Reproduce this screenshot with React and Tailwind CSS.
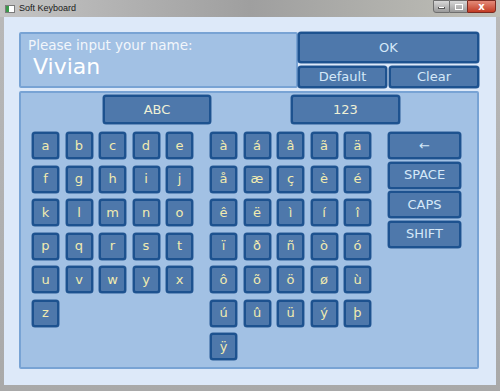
import React from 'react';

const letters = ['a', 'b', 'c', 'd', 'e', 'f', 'g', 'h', 'i', 'j', 'k', 'l', 'm', 'n', 'o', 'p', 'q', 'r', 's', 't', 'u', 'v', 'w', 'y', 'x', 'z'];
const accents = ['à', 'á', 'â', 'ã', 'ä', 'å', 'æ', 'ç', 'è', 'é', 'ê', 'ë', 'ì', 'í', 'î', 'ï', 'ð', 'ñ', 'ò', 'ó', 'ô', 'õ', 'ö', 'ø', 'ù', 'ú', 'û', 'ü', 'ý', 'þ', 'ÿ'];

const keyBase = 'flex items-center justify-center border-2 border-[#1d528f] bg-[#4e78ab] rounded-[3px] shadow-[0_0_0_0.5px_#2a5c96]';

const Key = ({ label }) => (
    <div className={`${keyBase} w-[27px] h-[27px] text-[13px] text-[#f1ebb0]`}>{label}</div>
);

const WideKey = ({ label, className = '' }) => (
    <div className={`${keyBase} text-[13px] text-[#d5e8f8] ${className}`}>{label}</div>
);

const App = () => {
    return (
        <div className="w-[500px] h-[391px] flex flex-col bg-gradient-to-b from-[#b9b9b9] to-[#a9a9a9] overflow-hidden" style={{ fontFamily: '"DejaVu Sans", sans-serif' }}>
            {/* title bar */}
            <div className="h-[17px] flex items-start relative bg-gradient-to-r from-[#c4c4c4] via-[#9f9f9f] to-[#c0c0b8]">
                <div className="mt-[5px] ml-[5px] w-[10px] h-[8px] bg-white border border-[#7a7a7a] flex">
                    <div className="w-[3px] bg-[#3a9a4a]" />
                </div>
                <span className="ml-[4px] mt-[3px] text-[9px] leading-[11px] text-[#1a1a1a]" style={{ fontFamily: '"Liberation Sans", sans-serif' }}>Soft Keyboard</span>
                <div className="absolute top-0 right-[4px] flex h-[13px]">
                    <div className="w-[17px] h-full bg-gradient-to-b from-[#d8d8d8] to-[#9a9a9a] border border-[#6f6f6f] rounded-bl-[3px] flex items-end justify-center pb-[3px]">
                        <div className="w-[7px] h-[2px] bg-white border border-[#555] border-t-0" />
                    </div>
                    <div className="w-[17px] h-full bg-gradient-to-b from-[#d8d8d8] to-[#9a9a9a] border-y border-[#6f6f6f] flex items-center justify-center">
                        <div className="w-[8px] h-[6px] border border-white" />
                    </div>
                    <div className="w-[29px] h-full bg-gradient-to-b from-[#e48a78] to-[#c23a22] border border-[#7a2a20] rounded-br-[3px] flex items-center justify-center text-white text-[10px] font-bold leading-none">x</div>
                </div>
            </div>

            {/* client area */}
            <div className="mx-[4px] mb-[6px] flex-1 bg-[#dde9f9] pt-[15px] pl-[15px]">
                {/* top panel */}
                <div className="flex w-[460px] h-[56px]">
                    <div className="flex-1 border-2 border-[#78a3d4] bg-[#a2c1e4] rounded-[2px] pl-[7px] pt-[3px]">
                        <div className="text-[13.5px] leading-[16px] text-[#f2f6fb]">Please input your name:</div>
                        <div className="text-[22px] leading-[26px] text-white ml-[5px] mt-[1px]">Vivian</div>
                    </div>
                    <div className="w-[181px] flex flex-col gap-[3px]">
                        <WideKey label="OK" className="h-[31px]" />
                        <div className="flex gap-[2px] h-[22px]">
                            <WideKey label="Default" className="w-[89px]" />
                            <WideKey label="Clear" className="flex-1" />
                        </div>
                    </div>
                </div>

                {/* keyboard panel */}
                <div className="mt-[3px] w-[460px] h-[278px] border-2 border-[#78a3d4] bg-[#a2c1e4] rounded-[2px]">
                    <div className="flex mt-[2px] ml-[82px] gap-[80px]">
                        <WideKey label="ABC" className="w-[108px] h-[29px] text-[#eef0d6]" />
                        <WideKey label="123" className="w-[109px] h-[29px] text-[#eef0d6]" />
                    </div>
                    <div className="flex mt-[8px] ml-[11px] gap-[17px] items-start">
                        <div className="grid grid-cols-5 gap-[6.5px] w-[161px]">
                            {letters.map(k => <Key key={k} label={k} />)}
                        </div>
                        <div className="grid grid-cols-5 gap-[6.5px] w-[161px]">
                            {accents.map(k => <Key key={k} label={k} />)}
                        </div>
                        <div className="flex flex-col gap-[2.5px] w-[73px]">
                            <WideKey label="←" className="h-[27px]" />
                            <WideKey label="SPACE" className="h-[27px]" />
                            <WideKey label="CAPS" className="h-[27px]" />
                            <WideKey label="SHIFT" className="h-[27px]" />
                        </div>
                    </div>
                </div>
            </div>
        </div>
    );
};

export default App;
